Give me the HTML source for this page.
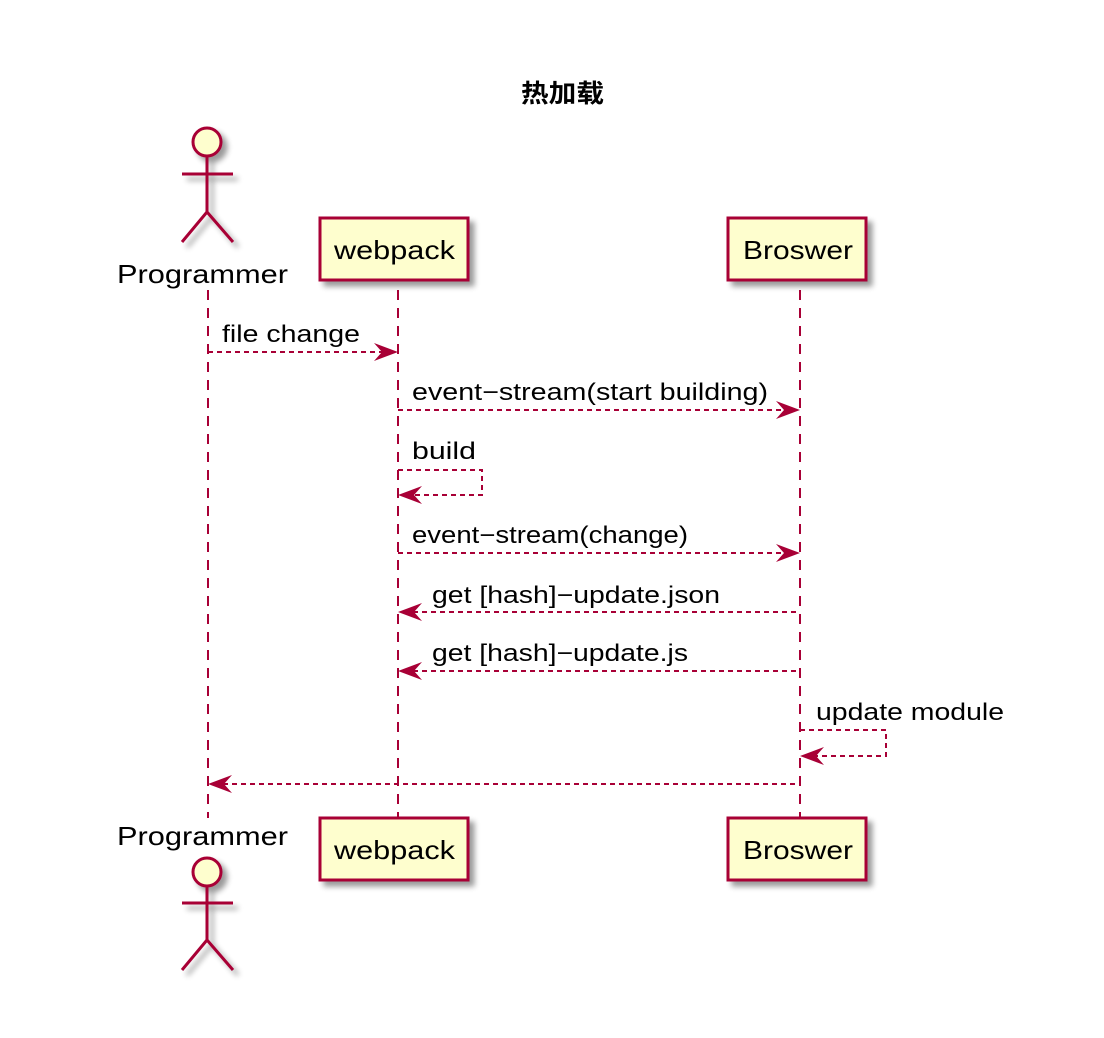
<!DOCTYPE html>
<html><head><meta charset="utf-8"><style>html,body{margin:0;padding:0;background:#fff}svg{display:block}</style></head>
<body>
<svg width="1104" height="1038" viewBox="0 0 1104 1038" xmlns="http://www.w3.org/2000/svg" font-family="Liberation Sans, DejaVu Sans, sans-serif">
<defs>
<filter id="sh" x="-20%" y="-20%" width="150%" height="150%"><feGaussianBlur in="SourceAlpha" stdDeviation="3"/><feOffset dx="5" dy="5"/><feComponentTransfer><feFuncA type="linear" slope="0.4"/></feComponentTransfer><feMerge><feMergeNode/><feMergeNode in="SourceGraphic"/></feMerge></filter>
</defs>
<text x="521" y="102" textLength="83" lengthAdjust="spacingAndGlyphs" font-size="25" font-weight="bold" font-family="Liberation Sans, Noto Sans CJK SC, sans-serif">热加载</text>
<g stroke="#A80036" stroke-width="2" stroke-dasharray="10,8" fill="none">
<line x1="208" y1="290" x2="208" y2="818"/>
<line x1="398" y1="290" x2="398" y2="818"/>
<line x1="800" y1="290" x2="800" y2="818"/>
</g>
<g filter="url(#sh)" stroke="#A80036" stroke-width="3" fill="#FEFECE">
<rect x="320" y="218" width="148" height="62"/>
<rect x="728" y="218" width="138" height="62"/>
<rect x="320" y="818" width="148" height="62"/>
<rect x="728" y="818" width="138" height="62"/>
<g>
<circle cx="207" cy="142" r="14"/>
<path d="M207 156V212M182 174H233M182 242L207 212L233 242" fill="none"/>
</g>
<g>
<circle cx="207" cy="872" r="14"/>
<path d="M207 886V940M182 903H233M182 970L207 940L233 970" fill="none"/>
</g>
</g>
<g font-size="26" fill="#000" lengthAdjust="spacingAndGlyphs">
<text x="334" y="259" textLength="121" lengthAdjust="spacingAndGlyphs">webpack</text>
<text x="743" y="259" textLength="110" lengthAdjust="spacingAndGlyphs">Broswer</text>
<text x="334" y="859" textLength="121" lengthAdjust="spacingAndGlyphs">webpack</text>
<text x="743" y="859" textLength="110" lengthAdjust="spacingAndGlyphs">Broswer</text>
<text x="117" y="283" textLength="171" lengthAdjust="spacingAndGlyphs">Programmer</text>
<text x="117" y="845" textLength="171" lengthAdjust="spacingAndGlyphs">Programmer</text>
</g>
<g stroke="#A80036" stroke-width="2" stroke-dasharray="5,4" fill="none">
<line x1="208" y1="352" x2="392" y2="352"/>
<line x1="398" y1="410" x2="794" y2="410"/>
<path d="M398 470H482V495H404"/>
<line x1="398" y1="553" x2="794" y2="553"/>
<line x1="404" y1="612" x2="800" y2="612"/>
<line x1="404" y1="671" x2="800" y2="671"/>
<path d="M800 730H886V756H806"/>
<line x1="214" y1="784" x2="800" y2="784"/>
</g>
<g fill="#A80036">
<path d="M398 352L374 343L382 352L374 361Z"/>
<path d="M800 410L776 401L784 410L776 419Z"/>
<path d="M398 495L422 486L414 495L422 504Z"/>
<path d="M800 553L776 544L784 553L776 562Z"/>
<path d="M398 612L422 603L414 612L422 621Z"/>
<path d="M398 671L422 662L414 671L422 680Z"/>
<path d="M800 756L824 747L816 756L824 765Z"/>
<path d="M208 784L232 775L224 784L232 793Z"/>
</g>
<g font-size="24" fill="#000">
<text x="222" y="342" textLength="138" lengthAdjust="spacingAndGlyphs">file change</text>
<text x="412" y="400" textLength="356" lengthAdjust="spacingAndGlyphs">event−stream(start building)</text>
<text x="412" y="459" textLength="64" lengthAdjust="spacingAndGlyphs">build</text>
<text x="412" y="543" textLength="276" lengthAdjust="spacingAndGlyphs">event−stream(change)</text>
<text x="432" y="603" textLength="288" lengthAdjust="spacingAndGlyphs">get [hash]−update.json</text>
<text x="432" y="661" textLength="256" lengthAdjust="spacingAndGlyphs">get [hash]−update.js</text>
<text x="816" y="720" textLength="188" lengthAdjust="spacingAndGlyphs">update module</text>
</g>
</svg>
</body></html>
